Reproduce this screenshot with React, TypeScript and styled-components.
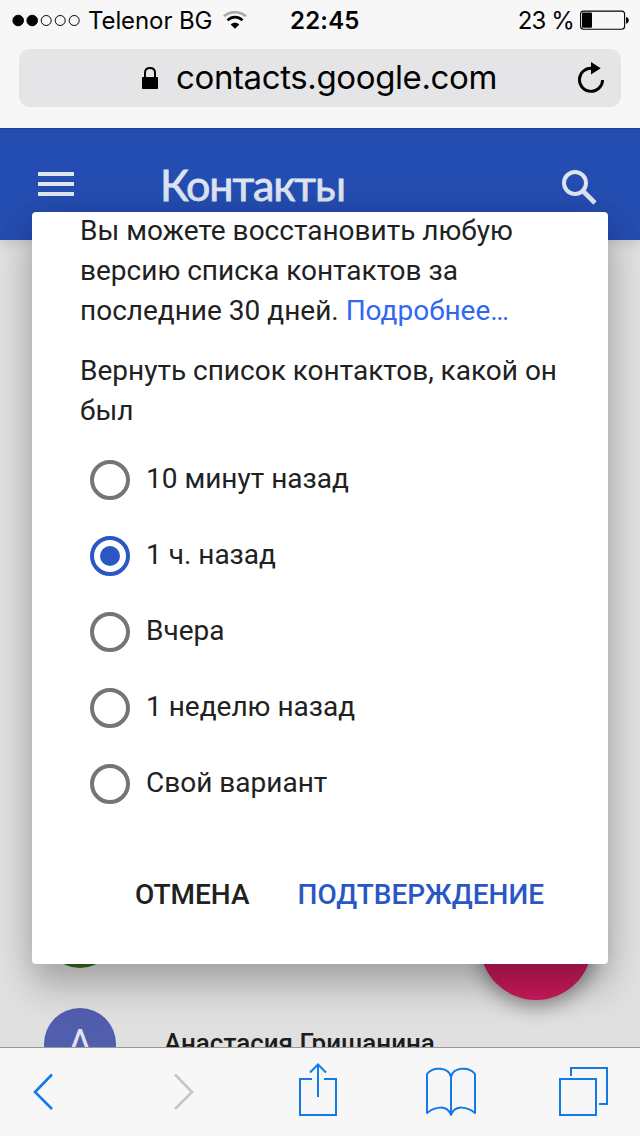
import React, { useState } from 'react';
import styled, { createGlobalStyle } from 'styled-components';

const GlobalStyle = createGlobalStyle`
  * { box-sizing: border-box; }
  body { margin: 0; background: #f7f7f8; }
  button { border: 0; padding: 0; background: none; cursor: pointer; }
`;

const Screen = styled.div`
  width: 640px;
  height: 1136px;
  display: grid;
  grid-template-rows: 128px 919px 89px;
  overflow: hidden;
  font-family: Roboto, sans-serif;
  color: #212121;
`;

const BrowserTop = styled.div`
  background: #f7f7f8;
  font-family: Inter, sans-serif;
  color: #030303;
`;

const StatusBar = styled.div`
  height: 40px;
  display: grid;
  grid-template-columns: 278px 93px 1fr;
  align-items: center;
  padding: 0 11px 0 12px;
  font-size: 24px;
  line-height: 38px;
  white-space: nowrap;
`;

const StatusGroup = styled.div<{ $end?: boolean }>`
  display: flex;
  align-items: center;
  justify-content: ${(p) => (p.$end ? 'flex-end' : 'flex-start')};
  height: 40px;
  svg { flex: none; }
`;

const Carrier = styled.span`
  margin: 2px 11px 0 7px;
  letter-spacing: -0.1px;
`;

const Charge = styled.span`
  margin: 2px 6px 0 0;
  letter-spacing: -0.9px;
`;

const Clock = styled.time`
  padding-top: 2px;
  font-weight: 600;
  letter-spacing: 0.2px;
`;

const AddressBar = styled.div`
  height: 58px;
  margin: 9px 19px 0;
  display: flex;
  align-items: center;
  padding: 0 16px 0 122px;
  border-radius: 11px;
  background: #e5e5e7;
`;

const Address = styled.span`
  flex: 1;
  margin-left: 17px;
  padding-bottom: 2px;
  font-size: 33px;
  line-height: 54px;
  letter-spacing: -0.38px;
`;

const Page = styled.main`
  position: relative;
  overflow: hidden;
  background: #e0e0e0;
`;

const AppHeader = styled.header`
  height: 112px;
  display: flex;
  align-items: flex-start;
  padding: 0 42px 0 38px;
  border-top: 1px solid #1d3f94;
  background: #244db1;
  box-shadow: 0 4px 10px rgba(0, 0, 0, 0.1);
`;

const MenuButton = styled.button`
  margin-top: 43px;
  width: 36px;
  height: 24px;
  display: flex;
  flex-direction: column;
  justify-content: space-between;
`;

const MenuLine = styled.span`
  height: 4px;
  background: #dfe4ee;
`;

const Title = styled.h1`
  flex: 1;
  margin: 30px 0 0 86px;
  font: 400 43px/52px Lato, sans-serif;
  letter-spacing: -1.1px;
  color: #dde3f0;
  -webkit-text-stroke: 0.8px #dde3f0;
`;

const SearchButton = styled.button`
  margin-top: 40px;
  width: 38px;
  height: 36px;
`;

const ContactList = styled.div`
  display: flex;
  flex-direction: column;
  gap: 40px;
  padding: 656px 44px 0;
`;

const ContactRow = styled.div`
  display: flex;
  align-items: center;
  gap: 48px;
  height: 72px;
`;

const Avatar = styled.span<{ $color: string }>`
  width: 72px;
  height: 72px;
  border-radius: 50%;
  background: ${(p) => p.$color};
  color: #dfe3ef;
  font-size: 40px;
  line-height: 73px;
  text-align: center;
`;

const ContactName = styled.span`
  font-size: 26px;
  font-weight: 500;
  line-height: 70px;
  padding-bottom: 2px;
  color: #1c1c1c;
`;

const Fab = styled.button`
  position: absolute;
  right: 48px;
  bottom: 47px;
  width: 112px;
  height: 112px;
  border-radius: 50%;
  background: #c8195a;
  box-shadow: 0 6px 20px rgba(0, 0, 0, 0.4);
`;

const Dialog = styled.section`
  position: absolute;
  top: 84px;
  left: 32px;
  width: 576px;
  height: 752px;
  display: flex;
  flex-direction: column;
  padding: 0 48px;
  border-radius: 4px;
  background: #fff;
  box-shadow: 0 24px 36px rgba(0, 0, 0, 0.22), 0 0 32px rgba(0, 0, 0, 0.12);
`;

const Paragraph = styled.p`
  position: relative;
  top: -1px;
  margin: 0 0 20px;
  font-size: 28px;
  line-height: 40px;
  white-space: nowrap;
`;

const MoreLink = styled.a`
  color: #3367f0;
`;

const Options = styled.div`
  display: flex;
  flex-direction: column;
  gap: 36px;
  margin: 8px 0 0 10px;
`;

const Option = styled.label`
  display: flex;
  align-items: center;
  gap: 16px;
  height: 40px;
  font-size: 28px;
  line-height: 36px;
  white-space: nowrap;
  cursor: pointer;
`;

const OptionText = styled.span`
  padding-bottom: 2px;
`;

const Radio = styled.input`
  appearance: none;
  flex: none;
  display: grid;
  place-items: center;
  width: 40px;
  height: 40px;
  margin: 0;
  border: 4px solid #757575;
  border-radius: 50%;
  &:checked { border-color: #2a56c6; }
  &:checked::after {
    content: '';
    width: 20px;
    height: 20px;
    border-radius: 50%;
    background: #2a56c6;
  }
`;

const Actions = styled.div`
  display: flex;
  justify-content: flex-end;
  gap: 48px;
  margin-top: 71px;
  padding-right: 16px;
`;

const Action = styled.button<{ $primary?: boolean }>`
  font: 500 28px/40px Roboto, sans-serif;
  color: ${(p) => (p.$primary ? '#2a56c6' : '#212121')};
`;

const Toolbar = styled.nav`
  display: grid;
  grid-template-columns: 141px 125px 127px 134px 50px;
  justify-items: start;
  align-items: start;
  padding: 14px 31px 0 32px;
  border-top: 1px solid #98989a;
  background: #f7f7f8;
`;

const ToolButton = styled.button<{ $off?: boolean }>`
  height: 56px;
  color: ${(p) => (p.$off ? '#c7c7c9' : '#1479ea')};
  svg { display: block; }
`;

const Signal = () => (
  <svg width="69" height="14" viewBox="0 0 69 14">
    {[0, 1, 2, 3, 4].map((i) => (
      <circle key={i} cx={6.2 + i * 14} cy="7.5" r={i < 2 ? 5.3 : 5} fill={i < 2 ? '#030303' : 'none'} stroke="#030303" strokeWidth="1" />
    ))}
  </svg>
);

const Wifi = () => (
  <svg width="24" height="18" viewBox="0 0 24 18" fill="none">
    <path d="M1 5.3C7-0.2 17-0.2 23 5.3" stroke="#a9a9ab" strokeWidth="2.7" />
    <path d="M4.5 9.2C9 5.2 15 5.2 19.5 9.2" stroke="#030303" strokeWidth="2.7" />
    <path d="M7.7 13.4C10 11.1 14 11.1 16.3 13.4L12 17.8Z" fill="#030303" />
  </svg>
);

const Battery = () => (
  <svg width="49" height="20" viewBox="0 0 49 20">
    <rect x="0.6" y="1.1" width="44" height="18.2" rx="3" fill="none" stroke="#030303" strokeWidth="1.1" />
    <rect x="2" y="2.6" width="10" height="15.2" rx="1" fill="#030303" />
    <path d="M46 7C49.7 7.5 49.7 13.2 46 13.7Z" fill="#030303" />
  </svg>
);

const Lock = () => (
  <svg width="18" height="24" viewBox="0 0 18 24">
    <rect x="1" y="11" width="16" height="12" rx="0.7" fill="#030303" />
    <path d="M4 12V6.7C4 3.5 6 2 9 2S14 3.5 14 6.7V12" fill="none" stroke="#030303" strokeWidth="2" />
  </svg>
);

const Reload = () => (
  <svg width="28" height="32" viewBox="0 0 28 32">
    <path d="M14.5 6.2A11.6 11.6 0 1 0 25.6 18" fill="none" stroke="#030303" strokeWidth="2.9" />
    <path d="M14 0L23.7 6.2L14 12.5Z" fill="#030303" />
  </svg>
);

const Search = () => (
  <svg width="38" height="38" viewBox="0 0 38 38" fill="none" stroke="#dfe4ee">
    <circle cx="15" cy="14" r="11" strokeWidth="4" />
    <path d="M23.5 22.5L35 34" strokeWidth="4.6" />
  </svg>
);

const Chevron = ({ forward }: { forward?: boolean }) => (
  <svg width="22" height="56" viewBox="0 0 22 56" fill="none" stroke="currentColor" strokeWidth="2.6">
    <path d={forward ? 'M2 12.5L19 30L2 47' : 'M20 12.5L3 30L20 47'} />
  </svg>
);

const Share = () => (
  <svg width="40" height="56" viewBox="0 0 40 56" fill="none" stroke="currentColor" strokeWidth="2">
    <path d="M14 17H2V53H38V17H26M20 35V3M12 10.5L20 2.5L28 10.5" />
  </svg>
);

const Book = () => (
  <svg width="52" height="56" viewBox="0 0 52 56" fill="none" stroke="currentColor" strokeWidth="2" strokeLinejoin="round">
    <path d="M26 53V15C24 5 8 4 2 12V51C9 45 22 42 26 53C30 42 43 45 50 51V12C44 4 28 5 26 15" />
  </svg>
);

const Tabs = () => (
  <svg width="50" height="56" viewBox="0 0 50 56" fill="none" stroke="currentColor" strokeWidth="2">
    <path d="M1 17H37V53H1ZM12 14V6H48V42H40" />
  </svg>
);

const choices = ['10 минут назад', '1 ч. назад', 'Вчера', '1 неделю назад', 'Свой вариант'];

export default function App() {
  const [selected, setSelected] = useState(1);
  return (
    <Screen>
      <GlobalStyle />
      <BrowserTop>
        <StatusBar>
          <StatusGroup>
            <Signal />
            <Carrier>Telenor BG</Carrier>
            <Wifi />
          </StatusGroup>
          <Clock>22:45</Clock>
          <StatusGroup $end>
            <Charge>23 %</Charge>
            <Battery />
          </StatusGroup>
        </StatusBar>
        <AddressBar>
          <Lock />
          <Address>contacts.google.com</Address>
          <Reload />
        </AddressBar>
      </BrowserTop>
      <Page>
        <AppHeader>
          <MenuButton aria-label="Меню">
            <MenuLine />
            <MenuLine />
            <MenuLine />
          </MenuButton>
          <Title>Контакты</Title>
          <SearchButton aria-label="Поиск">
            <Search />
          </SearchButton>
        </AppHeader>
        <ContactList>
          <ContactRow>
            <Avatar $color="#33691e" />
          </ContactRow>
          <ContactRow>
            <Avatar $color="#515eae">А</Avatar>
            <ContactName>Анастасия Гришанина</ContactName>
          </ContactRow>
        </ContactList>
        <Fab aria-label="Добавить" />
        <Dialog role="dialog">
          <Paragraph>
            Вы можете восстановить любую
            <br />
            версию списка контактов за
            <br />
            последние 30 дней. <MoreLink>Подробнее…</MoreLink>
          </Paragraph>
          <Paragraph>
            Вернуть список контактов, какой он
            <br />
            был
          </Paragraph>
          <Options>
            {choices.map((text, i) => (
              <Option key={text}>
                <Radio type="radio" name="version" checked={selected === i} onChange={() => setSelected(i)} />
                <OptionText>{text}</OptionText>
              </Option>
            ))}
          </Options>
          <Actions>
            <Action>ОТМЕНА</Action>
            <Action $primary>ПОДТВЕРЖДЕНИЕ</Action>
          </Actions>
        </Dialog>
      </Page>
      <Toolbar>
        <ToolButton aria-label="Назад"><Chevron /></ToolButton>
        <ToolButton $off aria-label="Вперёд"><Chevron forward /></ToolButton>
        <ToolButton aria-label="Поделиться"><Share /></ToolButton>
        <ToolButton aria-label="Закладки"><Book /></ToolButton>
        <ToolButton aria-label="Вкладки"><Tabs /></ToolButton>
      </Toolbar>
    </Screen>
  );
}
